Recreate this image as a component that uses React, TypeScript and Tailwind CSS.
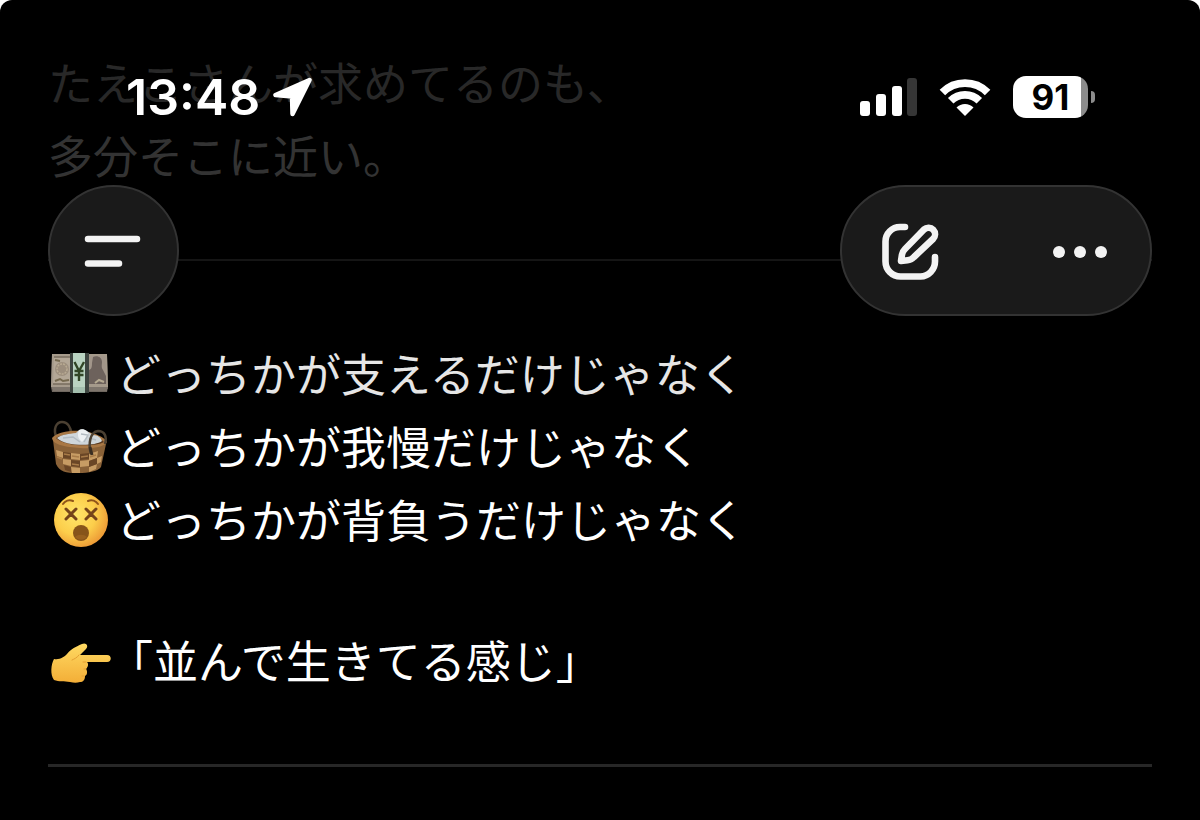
import { ReactNode } from "react";

function MoneyIcon() {
  return (
    <svg viewBox="-2 4 60 60" className="h-15 w-15 shrink-0 overflow-visible" role="img" aria-label="yen banknote">
      <path d="M2 12h55l1 33-1 5H2l-1-5z" fill="#6f675f" />
      <path d="M2 12h55l1 33H1z" fill="#a59a8b" />
      <path d="M4 15h17v27H3z" fill="#b3a796" />
      <path d="M4 15h17M3 42h18" stroke="#776c5e" strokeWidth="1.500" />
      <circle cx="12" cy="27" r="7" fill="#9c8e7d" />
      <circle cx="12" cy="27" r="5" fill="none" stroke="#b9ab93" strokeWidth="1.500" strokeDasharray="2 1" />
      <path d="M5 39l5-2 3 2 6-1M5 18l5 1" stroke="#75694f" strokeWidth="2" fill="none" />
      <path d="M39 14h16l1.500 28H39z" fill="#a2968a" />
      <path d="M43 15c4-2 9 0 9 5 0 3-1 5 1 8l3 6v8H39V28c3-1 3-4 3-7z" fill="#6d625c" />
      <path d="M45 41l4-3 5 2" stroke="#b5aa92" strokeWidth="2" fill="none" />
      <path d="M2 46h56M3 48h54" stroke="#8d847a" strokeWidth="1" />
      <path d="M20 11h19v40H20z" fill="#3d4540" />
      <path d="M23 11h12v40H23z" fill="#b9d3c1" />
      <path d="M23 45h12v6H23z" fill="#a3bfae" />
      <path d="M24.500 20l4.500 9v10M34 20l-5 9M24.500 29h9M24.500 33h9" stroke="#314626" strokeWidth="2.400" fill="none" />
    </svg>
  );
}

function BasketIcon() {
  return (
    <svg viewBox="-3 3 60 60" className="h-15 w-15 shrink-0 overflow-visible" role="img" aria-label="basket">
      <path d="M6 23C1 12 6 6 11 6c6 0 9 6 9 11" stroke="#4b4032" strokeWidth="2.500" fill="none" />
      <path d="M2 24l3 24c4 8 9 9 22 9 11 0 20-2 23-6l5-23z" fill="#8a6238" />
      <path
        d="M5 34l7 2v6l-6-2zM20 37l9 1v6l-9-1zM38 38l9-3-1 7-8 3zM12 43l8 1v6l-8-2zM29 45l9-1v6l-9 1zM20 51l9 1v5h-8zM46 42l5-2-1 6-4 2zM38 51l8-3-1 5-7 3z"
        fill="#c79c64"
      />
      <path
        d="M12 36l8 1v6l-8-1zM29 38l9-1v6l-9 1zM20 44l9 1v6l-9-1zM38 45l8-3v6l-8 3zM13 49l7 2v5l-6-2z"
        fill="#6a4626"
      />
      <path d="M6 41l5 2M13 38l6 1M21 40l7 1M30 41l7-1M21 48l7 1M39 41l6-2" stroke="#a87b48" strokeWidth="1.500" />
      <path d="M1 22C6 16 20 14 30 15c13 1 25 7 26 11-3 5-14 7-27 6C15 31 2 29 1 22z" fill="#a97845" />
      <path d="M5 22c7-6 40-6 48 4-8 5-40 5-48-4z" fill="#5b3b20" />
      <path d="M6 22c5-4 12-4 19-5 3-4 7-5 11-2l6 4c5 0 8 3 9 6-8 6-38 5-45-3z" fill="#cfd6da" />
      <path d="M28 14c4-2 8 0 10 5l-7 7c-4-3-5-7-3-12z" fill="#edf1f3" />
      <path d="M12 22l10-1 7 5M30 18l7 1-4 7M38 22l7 2" stroke="#b3bcc2" strokeWidth="1.500" fill="none" />
      <path d="M40 38c-3-10-1-22 7-23 7 0 9 6 7 13" stroke="#4b4032" strokeWidth="2.500" fill="none" />
      <path d="M39 31l2 8" stroke="#3a2d21" strokeWidth="3" />
    </svg>
  );
}

function DizzyIcon() {
  return (
    <svg viewBox="-2 2 60 60" className="h-15 w-15 shrink-0 overflow-visible" role="img" aria-label="dizzy face">
      <defs>
        <radialGradient id="face" cx="0.4" cy="0.4" r="0.62">
          <stop offset="0" stopColor="#ffe56a" />
          <stop offset="0.6" stopColor="#fcce4b" />
          <stop offset="1" stopColor="#ee9d37" />
        </radialGradient>
      </defs>
      <circle cx="31" cy="30" r="27" fill="url(#face)" />
      <path d="M13 14c2-3 6-5 10-3M38 11c4-2 8 0 10 3" stroke="#8f5419" strokeWidth="2" strokeLinecap="round" fill="none" />
      <path
        d="M16 19l10 10M26 19L16 29M36 19l10 10M46 19L36 29"
        stroke="#76451a"
        strokeWidth="3"
        strokeLinecap="round"
      />
      <circle cx="31" cy="43" r="8" fill="#87541a" />
      <path d="M25 47a8 8 0 0 0 12 0c-3-3-9-3-12 0z" fill="#98601f" />
    </svg>
  );
}

function PointIcon() {
  return (
    <svg viewBox="-2 0 60 60" className="h-15 w-15 shrink-0 overflow-visible" role="img" aria-label="pointing right">
      <defs>
        <linearGradient id="hand" x1="0" y1="0" x2="0" y2="1">
          <stop offset="0" stopColor="#ffda63" />
          <stop offset="1" stopColor="#f3ae37" />
        </linearGradient>
      </defs>
      <path
        d="M4 26c6 1 10-2 13-5 4-5 8-7 15-10 4-2 7 2 4 5l-6 6h27c5 0 5 7 0 7H37c2 2 1 5-1 7 2 3 1 6-1 7 0 4-2 6-5 6-3 1-6 1-10 0-6-1-11 0-16-2C0 42 1 31 4 26z"
        fill="url(#hand)"
      />
      <path d="M29 22c-2 3-5 4-7 5M36 29h-3M36 36h-2M34 43h-2" stroke="#e5a033" strokeWidth="1" fill="none" strokeLinecap="round" />
    </svg>
  );
}

function StatusBar() {
  return (
    <div className="flex h-16 items-center justify-between pr-[105px] pl-[126px] text-white">
      <div className="flex items-center gap-3">
        <span className="text-[50px] leading-none font-semibold">13:48</span>
        <svg viewBox="0 0 40 40" className="size-10" aria-hidden="true">
          <path
            d="M37.500 3L3.500 18l16.500 1.500L20.500 37z"
            fill="currentColor"
            stroke="currentColor"
            strokeWidth="4.500"
            strokeLinejoin="round"
          />
        </svg>
      </div>
      <div className="flex items-center gap-[22px]">
        <svg viewBox="0 0 58 38" className="h-[38px] w-[58px]" role="img" aria-label="Signal">
          <rect x="1" y="23" width="10" height="15" rx="3" fill="#fff" />
          <rect x="17" y="16" width="10" height="22" rx="3" fill="#fff" />
          <rect x="33" y="8" width="10" height="30" rx="3" fill="#fff" />
          <rect x="48" y="0" width="10" height="38" rx="3" fill="#363636" />
        </svg>
        <svg viewBox="0 0 52 38" className="h-[38px] w-[52px]" role="img" aria-label="Wi-Fi">
          <path d="M3.400 14.400A32 32 0 0 1 48.600 14.400M11.700 22.700A20.300 20.300 0 0 1 40.300 22.700" stroke="#fff" strokeWidth="7.800" fill="none" />
          <path d="M26 38l-8.500-8.500a12 12 0 0 1 17 0z" fill="#fff" />
        </svg>
        <div className="flex items-center gap-[3px]">
          <div className="flex h-[42px] w-[75px] items-center justify-center rounded-[13px] bg-linear-to-r from-white from-91% to-[#8c8c8c] to-91% text-[35px] leading-none font-bold text-black">
            91
          </div>
          <div className="h-3 w-1 rounded-r-full bg-[#8c8c8c]" />
        </div>
      </div>
    </div>
  );
}

function Toolbar() {
  return (
    <nav className="flex justify-between px-12 text-[#f3f3f3]">
      <button
        aria-label="Menu"
        className="flex size-[131px] items-center justify-center rounded-full border-2 border-[#333] bg-[#1a1a1a]"
      >
        <svg viewBox="0 0 60 56" className="h-14 w-15">
          <path d="M4 16h49M4 40.500h31" stroke="currentColor" strokeWidth="6.500" strokeLinecap="round" />
        </svg>
      </button>
      <div className="flex h-[131px] w-[312px] items-center justify-between rounded-full border-2 border-[#333] bg-[#1a1a1a] px-10">
        <button aria-label="New chat">
          <svg
            viewBox="0 0 56 56"
            className="size-14 overflow-visible"
            fill="none"
            stroke="currentColor"
            strokeWidth="6.600"
            strokeLinecap="round"
            strokeLinejoin="round"
          >
            <path d="M23 4H18A14.500 14.500 0 0 0 3.500 18.500V38.500A15 15 0 0 0 18.500 53.500H38.500A15 15 0 0 0 53 38.500V34" />
            <path d="M19 38L20 31.500Q20.500 28.500 23 26L42 6.500A6.500 6.500 0 0 1 51 16L32 34Q29 37 25.500 37.300Z" />
          </svg>
        </button>
        <button aria-label="More">
          <svg viewBox="0 0 60 56" className="h-14 w-15" fill="currentColor">
            <circle cx="9" cy="29" r="6" />
            <circle cx="30" cy="29" r="6" />
            <circle cx="51" cy="29" r="6" />
          </svg>
        </button>
      </div>
    </nav>
  );
}

function Row({ icon, className, children }: { icon: ReactNode; className: string; children: ReactNode }) {
  return (
    <li className={`flex items-center ${className}`}>
      {icon}
      <span>{children}</span>
    </li>
  );
}

export default function App() {
  return (
    <div className="min-h-screen bg-white">
      <div className="relative min-h-screen rounded-t-xl bg-black font-['Inter','Noto_Sans_CJK_JP',sans-serif]">
        <main lang="ja" className="px-12 pt-12 pb-10 text-[45px] leading-[73px] text-white">
          <p className="text-[#282828]">たえこさんが求めてるのも、</p>
          <p className="text-[#333]">多分そこに近い。</p>
          <hr className="mt-[65px] border-t-2 border-[#151515]" />
          <ul className="mt-[78px]">
            <Row icon={<MoneyIcon />} className="gap-2 text-[#e6e6e6]">
              どっちかが支えるだけじゃなく
            </Row>
            <Row icon={<BasketIcon />} className="gap-2">
              どっちかが我慢だけじゃなく
            </Row>
            <Row icon={<DizzyIcon />} className="gap-2">
              どっちかが背負うだけじゃなく
            </Row>
          </ul>
          <ul className="mt-[68px]">
            <Row icon={<PointIcon />} className="gap-0">
              「並んで生きてる感じ」
            </Row>
          </ul>
          <hr className="mt-[65px] border-t-3 border-[#272727]" />
        </main>

        <header className="absolute inset-x-0 top-0 flex flex-col gap-14 pt-[65px]">
          <StatusBar />
          <Toolbar />
        </header>
      </div>
    </div>
  );
}
